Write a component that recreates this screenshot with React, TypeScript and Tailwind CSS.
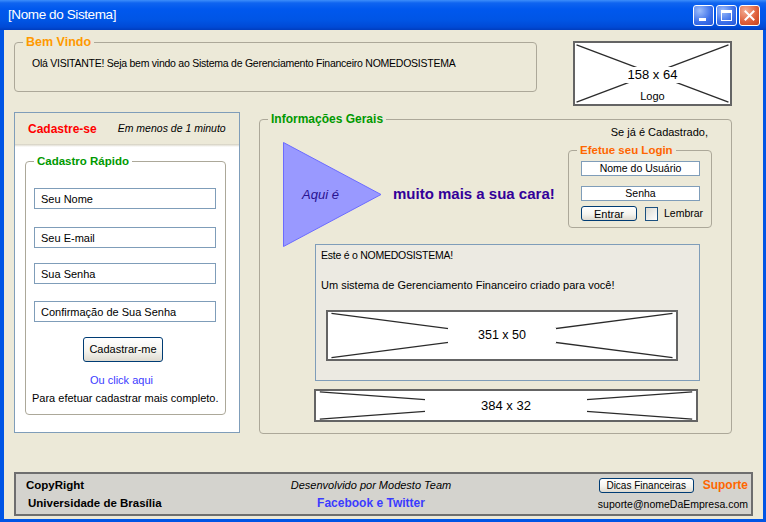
import React from 'react';

// image placeholder box (wireframe style: white box with an X)
function ImgBox({
  className,
  labelClass,
  label,
  children,
}: {
  className: string;
  labelClass: string;
  label: string;
  children?: React.ReactNode;
}) {
  return (
    <div className={`relative bg-white border-2 border-[#646464] flex flex-col items-center ${className}`}>
      <svg className="absolute inset-0 w-full h-full" viewBox="0 0 100 100" preserveAspectRatio="none">
        <line x1="1" y1="3" x2="99" y2="97" stroke="#2b2b2b" strokeWidth="1.3" vectorEffect="non-scaling-stroke" />
        <line x1="1" y1="97" x2="99" y2="3" stroke="#2b2b2b" strokeWidth="1.3" vectorEffect="non-scaling-stroke" />
      </svg>
      <span className={`relative bg-white ${labelClass}`}>{label}</span>
      {children}
    </div>
  );
}

function XpButton({ children, className }: { children: React.ReactNode; className: string }) {
  return (
    <button
      className={`flex items-center justify-center rounded-[3px] border border-[#003C74] bg-[linear-gradient(to_bottom,#FFFFFF,#F5F4EF_55%,#DEDAD0)] text-black ${className}`}
    >
      {children}
    </button>
  );
}

function TitleBar() {
  return (
    <div className="h-[30px] flex items-center pl-[8px] pr-[6px] bg-[linear-gradient(to_bottom,#3D8EFA_0px,#0F64F0_3px,#0058EE_9px,#0055E5_20px,#004AD6_27px,#003DBE_30px)]">
      <span className="text-white text-[13.5px] tracking-[-0.4px] leading-none">[Nome do Sistema]</span>
      <div className="ml-auto flex gap-[2px]">
        {/* minimize */}
        <div className="w-[21px] h-[21px] rounded-[3px] border border-white bg-[radial-gradient(circle_at_30%_25%,#9DBDFB,#3B6FE9_60%,#2457D9)] relative">
          <div className="absolute left-[5px] bottom-[4px] w-[7px] h-[3px] bg-white" />
        </div>
        {/* maximize */}
        <div className="w-[21px] h-[21px] rounded-[3px] border border-white bg-[radial-gradient(circle_at_30%_25%,#9DBDFB,#3B6FE9_60%,#2457D9)] flex items-center justify-center">
          <div className="w-[11px] h-[11px] border border-white border-t-[3px]" />
        </div>
        {/* close */}
        <div className="w-[21px] h-[21px] rounded-[3px] border border-white bg-[radial-gradient(circle_at_30%_25%,#F4AE94,#DE5E39_60%,#C3421E)] flex items-center justify-center">
          <svg width="11" height="11" viewBox="0 0 11 11">
            <path d="M1.5 1.5 L9.5 9.5 M9.5 1.5 L1.5 9.5" stroke="white" strokeWidth="2" strokeLinecap="square" />
          </svg>
        </div>
      </div>
    </div>
  );
}

function LeftPanel() {
  return (
    <div className="w-[226px] h-[321px] border border-[#7F9DB9] bg-white flex flex-col">
      <div className="h-[31px] bg-[#ECE9D8] flex items-center pl-[13px]">
        <span className="text-[12px] font-bold text-[#FF0000]">Cadastre-se</span>
        <span className="ml-[21px] text-[10.5px] italic">Em menos de 1 minuto</span>
      </div>
      <div className="h-[3px] bg-[linear-gradient(to_bottom,#D3CFBF,#FFFFFF)]" />
      <fieldset className="ml-[10px] mt-[7px] w-[201px] h-[261px] border border-[#ACA899] rounded-[4px]">
        <legend className="ml-[8px] px-[3px] text-[11.5px] leading-[14px] font-bold text-[#009900]">Cadastro Rápido</legend>
        <input readOnly value="Seu Nome" className="block ml-[8px] mt-[20px] w-[182px] h-[21px] bg-white border border-[#7F9DB9] pl-[6px] text-[11px] outline-none" />
        <input readOnly value="Seu E-mail" className="block ml-[8px] mt-[18px] w-[182px] h-[21px] bg-white border border-[#7F9DB9] pl-[6px] text-[11px] outline-none" />
        <input readOnly value="Sua Senha" className="block ml-[8px] mt-[15px] w-[182px] h-[21px] bg-white border border-[#7F9DB9] pl-[6px] text-[11px] outline-none" />
        <input readOnly value="Confirmação de Sua Senha" className="block ml-[8px] mt-[17px] w-[182px] h-[21px] bg-white border border-[#7F9DB9] pl-[6px] text-[11px] outline-none" />
        <XpButton className="ml-[57px] mt-[15px] w-[80px] h-[25px] text-[11px]">Cadastrar-me</XpButton>
        <p className="ml-[64px] mt-[11px] text-[11px] leading-[14px] text-[#3B3BFF]">Ou click aqui</p>
        <p className="ml-[6px] mt-[4px] text-[11px] leading-[14px]">Para efetuar cadastrar mais completo.</p>
      </fieldset>
    </div>
  );
}

function LoginBox() {
  return (
    <fieldset className="mt-[4px] h-[85px] border border-[#ACA899] rounded-[4px]">
      <legend className="ml-[8px] px-[3px] text-[11.5px] leading-[14px] font-bold text-[#FF6600]">Efetue seu Login</legend>
      <input readOnly value="Nome do Usuário" className="block ml-[12px] mt-[4px] w-[119px] h-[15px] bg-white border border-[#7F9DB9] text-center text-[10.5px] outline-none" />
      <input readOnly value="Senha" className="block ml-[12px] mt-[10px] w-[119px] h-[15px] bg-white border border-[#7F9DB9] text-center text-[10.5px] outline-none" />
      <div className="flex items-center ml-[12px] mt-[5px]">
        <XpButton className="w-[56px] h-[15px] text-[11px]">Entrar</XpButton>
        <div className="ml-[8px] w-[13px] h-[14px] border border-[#1C5180] bg-[linear-gradient(135deg,#DCDBD3,#FFFFFF)]" />
        <span className="ml-[6px] text-[10.5px]">Lembrar</span>
      </div>
    </fieldset>
  );
}

function InfoGeral() {
  return (
    <fieldset className="ml-[19px] w-[473px] h-[322px] border border-[#ACA899] rounded-[4px]">
      <legend className="ml-[8px] px-[3px] text-[12px] leading-[14px] font-bold text-[#009900]">Informações Gerais</legend>
      <div className="flex h-[102px]">
        <div className="flex items-center self-start ml-[23px] mt-[16px] h-[105px]">
          <div className="relative w-[99px] h-[105px] flex items-center pl-[19px]">
            <svg className="absolute inset-0" width="99" height="105" viewBox="0 0 99 105">
              <polygon points="0.5,0.5 98,52.5 0.5,104.5" fill="#9999FF" stroke="#6B6BFF" strokeWidth="1" />
            </svg>
            <span className="relative text-[13px] italic text-[#2A1390]">Aqui é</span>
          </div>
          <span className="ml-[11px] text-[15px] font-bold text-[#330099]">muito mais a sua cara!</span>
        </div>
        <div className="ml-auto mr-[19px] w-[144px] flex flex-col">
          <p className="text-right pr-[4px] text-[11px] leading-[13px]">Se já é Cadastrado,</p>
          <LoginBox />
        </div>
      </div>
      <div className="ml-[55px] mt-[16px] w-[385px] h-[137px] border border-[#7F9DB9] bg-[#ECEAE2] pl-[5px] pt-[4px]">
        <p className="text-[10.5px] leading-[13px] tracking-[-0.25px]">Este é o NOMEDOSISTEMA!</p>
        <p className="mt-[17px] text-[11px] leading-[13px]">Um sistema de Gerenciamento Financeiro criado para você!</p>
        <ImgBox className="ml-[5px] mt-[18px] w-[352px] h-[51px] justify-center" labelClass="px-[30px] text-[12.5px] leading-[15px]" label="351 x 50" />
      </div>
      <ImgBox className="ml-[54px] mt-[8px] w-[384px] h-[33px] justify-center" labelClass="px-[56px] text-[13px] leading-[13px]" label="384 x 32" />
    </fieldset>
  );
}

export default function App() {
  return (
    <div className="w-[766px] h-[522px] flex flex-col bg-[#0055E5] [font-family:'Liberation_Sans',Arial,sans-serif] text-black">
      <TitleBar />
      <div className="flex-1 ml-[4px] mr-[3px] mb-[3px] bg-[#ECE9D8] flex flex-col pl-[10px]">
        <div className="flex items-start mt-[5px]">
          <fieldset className="w-[523px] h-[57px] border border-[#ACA899] rounded-[4px]">
            <legend className="ml-[8px] px-[3px] text-[12.5px] leading-[14px] font-bold text-[#FF9900]">Bem Vindo</legend>
            <p className="pl-[17px] pt-[8px] text-[10.5px] leading-[13px] tracking-[-0.25px]">
              Olá VISITANTE! Seja bem vindo ao Sistema de Gerenciamento Financeiro NOMEDOSISTEMA
            </p>
          </fieldset>
          <ImgBox className="ml-[36px] mt-[6px] w-[159px] h-[65px] pt-[24px]" labelClass="px-[4px] text-[13px] leading-[16px]" label="158 x 64">
            <span className="relative mt-[7px] text-[11px] leading-[13px]">Logo</span>
          </ImgBox>
        </div>

        <div className="flex items-start mt-[6px]">
          <LeftPanel />
          <InfoGeral />
        </div>

        <div className="mt-[38px] w-[739px] h-[44px] border-2 border-[#6E6E6E] bg-[#D4D3CE] flex">
          <div className="w-[250px] flex flex-col pl-[10px] pt-[4px] text-[11.5px] font-bold leading-[14px]">
            <span>CopyRight</span>
            <span className="mt-[4px] pl-[2px]">Universidade de Brasília</span>
          </div>
          <div className="w-[210px] flex flex-col items-center pt-[4px] leading-[14px]">
            <span className="text-[11px] italic">Desenvolvido por Modesto Team</span>
            <span className="mt-[4px] text-[12px] font-bold text-[#3B3BFF]">Facebook e Twitter</span>
          </div>
          <div className="flex-1 flex flex-col items-end pr-[3px] pt-[3px]">
            <div className="flex items-center h-[16px]">
              <XpButton className="w-[95px] h-[15px] text-[10px]">Dicas Financeiras</XpButton>
              <span className="ml-[9px] text-[12px] font-bold text-[#FF6600]">Suporte</span>
            </div>
            <span className="mt-[4px] text-[10.5px] leading-[14px]">suporte@nomeDaEmpresa.com</span>
          </div>
        </div>
      </div>
    </div>
  );
}
